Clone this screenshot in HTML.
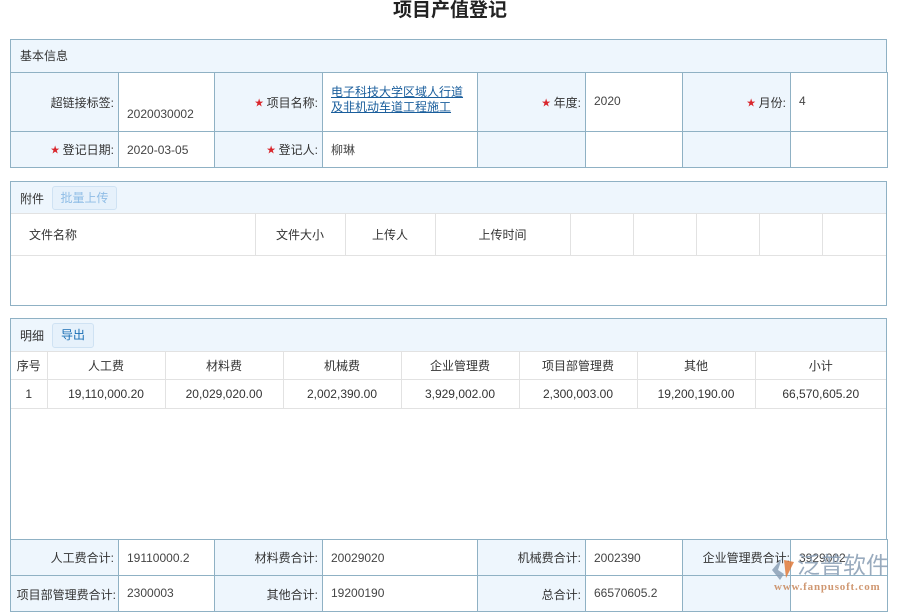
<!DOCTYPE html>
<html><head><meta charset="utf-8"><style>
*{box-sizing:border-box;margin:0;padding:0}
body{width:900px;height:600px;overflow:hidden;background:#fff;font-family:"Liberation Sans","Noto Sans CJK SC",sans-serif;font-size:12px;color:#333;position:relative}
.a{position:absolute}
.title{left:0;width:900px;top:-1px;text-align:center;font-size:19px;font-weight:bold;color:#222;line-height:24px}
.box{border:1px solid #8fb1c4}
.hd{background:#eef6fd}
table{border-collapse:collapse;table-layout:fixed;position:absolute}
td{border:1px solid #8fb1c4;font-size:12px;color:#333;padding:0 8px}
td.l{background:#eef6fd;text-align:right;padding-right:4px}
td.v{background:#fff;color:#444}
.r{color:#d9262c;font-size:9px;vertical-align:1px;margin-right:3px}
.g td{border:1px solid #e2e2e2;text-align:center;padding:0}
.btn{border:1px solid #cfe2f3;background:#e6f1fb;border-radius:3px;text-align:center;line-height:22px}
a{color:#1a5e9c}
</style></head><body>
<div class="a title">项目产值登记</div>

<div class="a box hd" style="left:10px;top:39px;width:877px;height:34px"></div>
<div class="a" style="left:20px;top:47px">基本信息</div>
<table style="left:10px;top:72px;width:877px">
<colgroup><col style="width:108px"><col style="width:96px"><col style="width:108px"><col style="width:155px"><col style="width:108px"><col style="width:97px"><col style="width:108px"><col style="width:97px"></colgroup>
<tr style="height:59px"><td class="l">超链接标签:</td><td class="v" style="vertical-align:bottom;padding-bottom:10px">2020030002</td><td class="l"><span class="r">★</span>项目名称:</td><td class="v" style="line-height:15px;padding-bottom:4px"><a style="text-decoration:underline">电子科技大学区域人行道及非机动车道工程施工</a></td><td class="l"><span class="r">★</span>年度:</td><td class="v" style="padding-bottom:2px">2020</td><td class="l"><span class="r">★</span>月份:</td><td class="v" style="padding-bottom:2px">4</td></tr>
<tr style="height:36px"><td class="l"><span class="r">★</span>登记日期:</td><td class="v">2020-03-05</td><td class="l"><span class="r">★</span>登记人:</td><td class="v">柳琳</td><td class="l"></td><td class="v"></td><td class="l"></td><td class="v"></td></tr>
</table>

<div class="a box" style="left:10px;top:181px;width:877px;height:125px"></div>
<div class="a hd" style="left:11px;top:182px;width:875px;height:32px;border-bottom:1px solid #e2e2e2"></div>
<div class="a" style="left:20px;top:190px">附件</div>
<div class="a btn" style="left:52px;top:186px;width:65px;height:24px;color:#8fbde6">批量上传</div>
<table class="g" style="left:11px;top:214px;width:875px">
<colgroup><col style="width:244px"><col style="width:90px"><col style="width:90px"><col style="width:135px"><col style="width:63px"><col style="width:63px"><col style="width:63px"><col style="width:63px"><col style="width:64px"></colgroup>
<tr style="height:41px"><td style="text-align:left;padding-left:18px;border-left:none;border-top:none">文件名称</td><td style="border-top:none">文件大小</td><td style="border-top:none">上传人</td><td style="border-top:none">上传时间</td><td style="border-top:none"></td><td style="border-top:none"></td><td style="border-top:none"></td><td style="border-top:none"></td><td style="border-top:none;border-right:none"></td></tr>
</table>

<div class="a box" style="left:10px;top:318px;width:877px;height:222px"></div>
<div class="a hd" style="left:11px;top:319px;width:875px;height:33px;border-bottom:1px solid #e2e2e2"></div>
<div class="a" style="left:20px;top:327px">明细</div>
<div class="a btn" style="left:52px;top:323px;width:42px;height:25px;color:#1a6fb5">导出</div>
<table class="g" style="left:11px;top:352px;width:875px">
<colgroup><col style="width:36px"><col style="width:118px"><col style="width:118px"><col style="width:118px"><col style="width:118px"><col style="width:118px"><col style="width:118px"><col style="width:131px"></colgroup>
<tr style="height:27px"><td style="border-left:none;border-top:none">序号</td><td style="border-top:none">人工费</td><td style="border-top:none">材料费</td><td style="border-top:none">机械费</td><td style="border-top:none">企业管理费</td><td style="border-top:none">项目部管理费</td><td style="border-top:none">其他</td><td style="border-top:none;border-right:none">小计</td></tr>
<tr style="height:29px"><td style="border-left:none">1</td><td>19,110,000.20</td><td>20,029,020.00</td><td>2,002,390.00</td><td>3,929,002.00</td><td>2,300,003.00</td><td>19,200,190.00</td><td style="border-right:none">66,570,605.20</td></tr>
</table>

<table style="left:10px;top:539px;width:877px">
<colgroup><col style="width:108px"><col style="width:96px"><col style="width:108px"><col style="width:155px"><col style="width:108px"><col style="width:97px"><col style="width:108px"><col style="width:97px"></colgroup>
<tr style="height:36px"><td class="l">人工费合计:</td><td class="v">19110000.2</td><td class="l">材料费合计:</td><td class="v">20029020</td><td class="l">机械费合计:</td><td class="v">2002390</td><td class="l" style="white-space:nowrap;padding:0">企业管理费合计:</td><td class="v">3929002</td></tr>
<tr style="height:36px"><td class="l" style="white-space:nowrap;padding:0 2px 0 0;vertical-align:top;padding-top:10px">项目部管理费合计:</td><td class="v" style="vertical-align:top;padding-top:10px">2300003</td><td class="l" style="vertical-align:top;padding-top:10px">其他合计:</td><td class="v" style="vertical-align:top;padding-top:10px">19200190</td><td class="l" style="vertical-align:top;padding-top:10px">总合计:</td><td class="v" style="vertical-align:top;padding-top:10px">66570605.2</td><td class="l"></td><td class="v"></td></tr>
</table>

<svg class="a" style="left:768px;top:556px" width="30" height="26" viewBox="0 0 30 26"><path d="M14 2 L4 14 L12 24 L16 18 L10 14 Z" fill="#8a9fb5" opacity=".85"/><path d="M16 4 L26 6 L18 22 Z" fill="#e07a3a" opacity=".85"/></svg>
<div class="a" style="left:797px;top:551px;font-size:23px;line-height:28px;color:#8fa2b8;white-space:nowrap;opacity:.9">泛普软件</div>
<div class="a" style="left:774px;top:581px;font-size:11px;font-family:'Liberation Serif',serif;color:#c8875a;white-space:nowrap;letter-spacing:.8px;font-weight:bold;opacity:.85">www.fanpusoft.com</div>
</body></html>
